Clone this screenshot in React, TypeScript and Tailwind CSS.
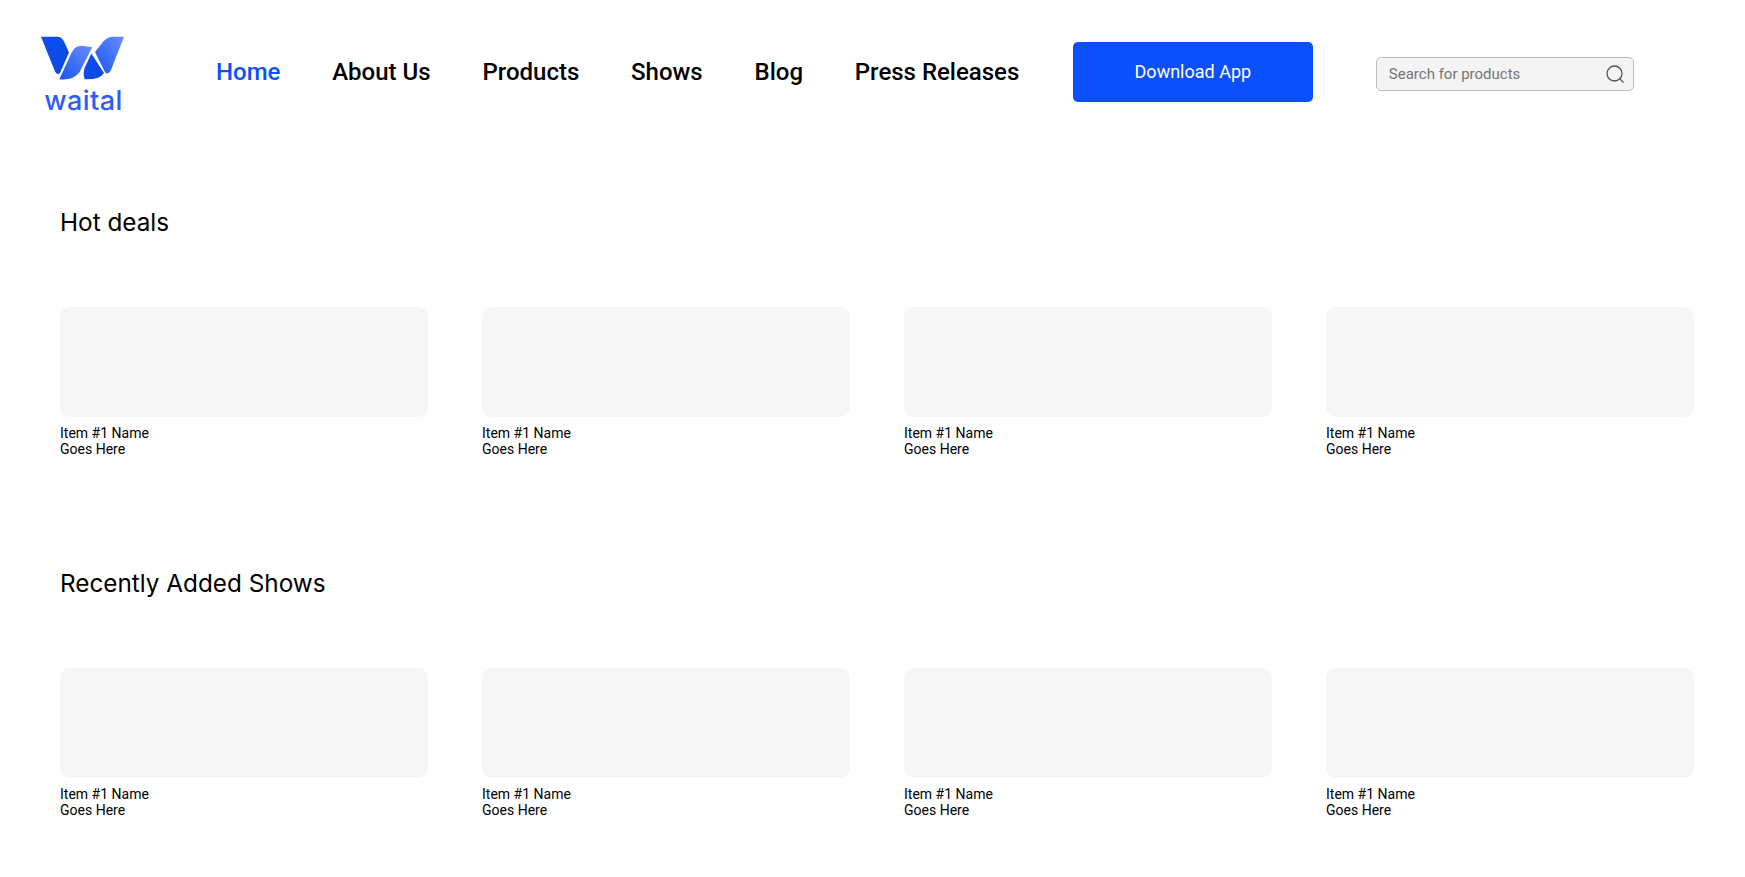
const navLinks = ["Home", "About Us", "Products", "Shows", "Blog", "Press Releases"];

const sections = ["Hot deals", "Recently Added Shows"];

const Logo = () => (
  <div className="mt-[7px] -ml-[1px] flex w-[85px] flex-col items-center">
    <svg width="85" height="46" viewBox="60 50 255 132" preserveAspectRatio="none">
      <defs>
        <linearGradient id="logoA" x1="0" y1="0" x2="1" y2="1">
          <stop offset="0" stopColor="#0b50fa" />
          <stop offset="1" stopColor="#0f46d8" />
        </linearGradient>
        <linearGradient id="logoB" x1="1" y1="0" x2="0" y2="1">
          <stop offset="0" stopColor="#6a8cff" />
          <stop offset="1" stopColor="#1a56f0" />
        </linearGradient>
      </defs>
      <path d="M63 52H112Q125 52 132 66L147 97L120 156Q112 164 105 152Z" fill="url(#logoA)" />
      <path d="M217 82L178 155Q160 178 118 174L155 97Q164 78 185 78Z" fill="url(#logoB)" />
      <path d="M214 100L252 156Q240 176 194 174Q188 160 194 141Z" fill="url(#logoA)" />
      <path d="M312 52L272 150Q262 164 254 152L225 96L250 66Q262 52 280 52Z" fill="url(#logoB)" />
    </svg>
    <span className="mt-[4px] ml-[2px] font-['Inter',sans-serif] text-[27px] leading-[30px] font-medium tracking-[0.4px] text-[#2f5cf6]">
      waital
    </span>
  </div>
);

const Header = () => (
  <header className="flex h-[144px] items-center pl-[41px]">
    <Logo />
    <nav className="ml-[91px] flex items-center gap-[51.8px] font-['Roboto',sans-serif] text-[24px] font-medium text-black">
      {navLinks.map((link, i) => (
        <a key={link} className={i === 0 ? "text-[#0b50fa]" : ""}>
          {link}
        </a>
      ))}
    </nav>
    <button className="ml-[53.5px] h-[60px] w-[240px] rounded-[5px] bg-[#0b50fa] pb-[2px] font-['Roboto',sans-serif] text-[18px] text-white">
      Download App
    </button>
    <div className="mt-[4px] ml-[63px] flex h-[34px] w-[258px] items-center justify-between rounded-[5px] border border-[#bdbdbd] bg-[#f4f4f4] pr-[8px] pl-[12px]">
      <span className="font-['Roboto',sans-serif] text-[15px] text-[#757575]">Search for products</span>
      <svg width="20" height="20" viewBox="0 0 20 20" fill="none" stroke="#555" strokeWidth="1.3">
        <circle cx="9.5" cy="9.5" r="7.5" />
        <path d="M15 15L18.5 18.5" />
      </svg>
    </div>
  </header>
);

const Card = () => (
  <div className="w-[368px]">
    <div className="h-[110px] rounded-[10px] bg-[#f6f6f6]" />
    <p className="mt-[8px] font-['Roboto',sans-serif] text-[14px] leading-[16px] text-black">
      Item #1 Name
      <br />
      Goes Here
    </p>
  </div>
);

export default function App() {
  return (
    <div className="min-h-[877px] bg-white">
      <Header />
      <main className="flex flex-col gap-[110px] pt-[62px] pl-[60px]">
        {sections.map((title) => (
          <section key={title}>
            <h2 className="font-['Inter',sans-serif] text-[24.3px] leading-[32px] text-black">{title}</h2>
            <div className="mt-[69px] flex gap-[54px]">
              <Card />
              <Card />
              <Card />
              <Card />
            </div>
          </section>
        ))}
      </main>
    </div>
  );
}
